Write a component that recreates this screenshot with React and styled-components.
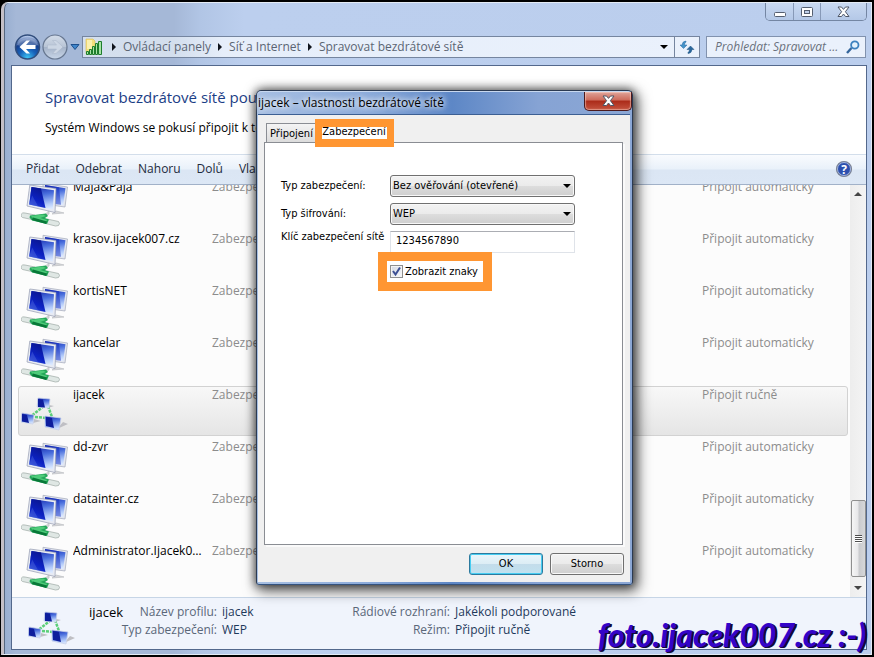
import React, { useState } from 'react';
import styled, { createGlobalStyle } from 'styled-components';

const GlobalStyle = createGlobalStyle`
    * {
        box-sizing: border-box;
    }
    body {
        margin: 0;
        background: #000;
        font-family: "Open Sans", "Noto Sans", sans-serif;
        font-size: 12px;
        line-height: 16px;
        color: #000;
    }
    button, input, select {
        font: inherit;
        color: inherit;
        margin: 0;
    }
`

const Screen = styled.div`
    position: relative;
    display: flex;
    height: 100vh;
    padding: 2px 2px 2px 1px;
    overflow: hidden;
`

const Window = styled.main`
    display: flex;
    flex-direction: column;
    flex: 1;
    min-width: 0;
    padding: 0 4px 4px 7px;
    border: solid 1px #e4ebf5;
    border-left: solid 3px #c4bfc6;
    border-top-left-radius: 7px;
    background: linear-gradient(90deg, #98aed0 0, #a5b8d7 12px, #a5b8d7 170px, #b1c5e5 196px, #bccfee 240px, #bbceed 100%);
    box-shadow: inset 1px 0 0 #56677f;
`

const TitleBar = styled.header`
    display: flex;
    justify-content: flex-end;
    height: 30px;
`

const WindowButtons = styled.div`
    display: flex;
    height: 18px;
    border: solid 1px #7486a3;
    border-top: 0;
    border-radius: 0 0 5px 5px;
    overflow: hidden;
`

const WindowButton = styled.button`
    display: flex;
    align-items: center;
    justify-content: center;
    width: ${props => props.$wide ? '46px' : '27px'};
    padding: 0;
    border: 0;
    border-left: ${props => props.$first ? '0' : 'solid 1px #8799b7'};
    background: linear-gradient(#c9d9f1, #b4c8e7);
`

const NavBar = styled.nav`
    display: flex;
    align-items: center;
    height: 32px;
    padding-bottom: 4px;
`

const NavButtons = styled.div`
    display: flex;
    align-items: center;
    width: 71px;
    padding-left: 3px;
`

const NavButton = styled.button`
    display: flex;
    padding: 0;
    border: 0;
    background: none;
`

const AddressBar = styled.div`
    display: flex;
    align-items: center;
    flex: 1;
    height: 22px;
    padding-left: 2px;
    border: solid 1px #75859f;
    background: linear-gradient(90deg, #d4dfee 0, #d3deed 90px, #e6eefa 140px, #eaf1fc 100%);
    color: #5b6573;
    > svg {
        margin-right: 2px;
    }
`

const Crumb = styled.a`
    color: inherit;
    text-decoration: none;
    white-space: nowrap;
`

const CrumbArrow = styled.span`
    width: 0;
    margin: 0 7px;
    border: solid 4px transparent;
    border-left-color: #10141c;
    border-right-width: 0;
`

const AddressButton = styled.button`
    display: flex;
    align-items: center;
    justify-content: center;
    width: ${props => props.$divided ? '25px' : '21px'};
    height: 20px;
    margin-left: ${props => props.$divided ? '0' : 'auto'};
    padding: 0;
    border: 0;
    border-left: ${props => props.$divided ? 'solid 1px #75859f' : '0'};
    background: none;
`

const SearchBox = styled.label`
    display: flex;
    align-items: center;
    width: 160px;
    height: 22px;
    margin: 0 1px 0 6px;
    padding: 0 5px 0 8px;
    border: solid 1px #8192ae;
    background: #eaf1fc;
`

const SearchInput = styled.input`
    flex: 1;
    min-width: 0;
    padding: 0;
    border: 0;
    outline: 0;
    background: none;
    font-style: italic;
    &::placeholder {
        color: #6a717c;
        opacity: 1;
    }
`

const Client = styled.section`
    display: flex;
    flex-direction: column;
    flex: 1;
    min-height: 0;
    border: solid 1px #53688c;
    background: #fcfcfc;
`

const Intro = styled.div`
    height: 88px;
    padding: 20px 33px;
    background: #fff;
    white-space: nowrap;
    overflow: hidden;
`

const Heading = styled.h1`
    margin: 0 0 12px;
    color: #1b3e86;
    font-size: 15px;
    font-weight: 400;
    line-height: 22px;
`

const Paragraph = styled.p`
    margin: 0;
`

const Toolbar = styled.div`
    display: flex;
    align-items: center;
    gap: 16px;
    height: 31px;
    padding: 0 13px 1px 14px;
    border-top: solid 1px #d3deeb;
    border-bottom: solid 1px #a1b1c8;
    background: linear-gradient(#f9fbfe 0, #e9f1fa 48%, #dbe6f4 52%, #dce7f5 100%);
`

const ToolButton = styled.button`
    padding: 0;
    border: 0;
    background: none;
    color: #1e2a3c;
    white-space: nowrap;
`

const HelpButton = styled.button`
    display: flex;
    margin-left: auto;
    padding: 0;
    border: 0;
    background: none;
`

const ListArea = styled.div`
    display: flex;
    flex: 1;
    min-height: 0;
`

const NetworkList = styled.ul`
    display: flex;
    flex-direction: column;
    justify-content: flex-end;
    gap: 2px;
    flex: 1;
    margin: 0;
    padding: 0 2px 5px 6px;
    overflow: hidden;
    list-style: none;
`

const NetworkRow = styled.li`
    display: grid;
    grid-template-columns: 54px 139px 1fr 145px;
    flex: none;
    height: 50px;
    border: solid 1px ${props => props.$selected ? '#d2d2d2' : 'transparent'};
    border-radius: 3px;
    background: ${props => props.$selected ? 'linear-gradient(#f8f8f8, #e5e5e5)' : 'none'};
    white-space: nowrap;
`

const IconCell = styled.span`
    padding: 2px 0 0 2px;
`

const NetworkName = styled.span`
    overflow: hidden;
    text-overflow: ellipsis;
    padding-right: 8px;
`

const Muted = styled.span`
    color: #8c8c8c;
    overflow: hidden;
`

const ScrollBar = styled.div`
    display: flex;
    flex-direction: column;
    align-items: center;
    justify-content: space-between;
    width: 16px;
    padding: 7px 0;
    background: linear-gradient(90deg, #ededed, #f4f4f4);
`

const ScrollArrow = styled.span`
    border: solid 4px transparent;
    border-top: ${props => props.$down ? 'solid 4px #444' : '0'};
    border-bottom: ${props => props.$down ? '0' : 'solid 4px #444'};
`

const ScrollThumb = styled.div`
    display: flex;
    flex-direction: column;
    align-items: center;
    justify-content: center;
    width: 15px;
    height: 77px;
    margin: auto 0 9px;
    border: solid 1px #8f8f8f;
    border-radius: 2px;
    background: linear-gradient(90deg, #f6f6f6 0, #e6e6e8 48%, #c9cacd 52%, #d6d7d9 100%);
`

const Grip = styled.i`
    width: 7px;
    height: 2px;
    border-top: solid 1px #4d4d4d;
    background: #fff;
`

const Details = styled.footer`
    display: flex;
    height: 52px;
    padding: 5px 16px;
    border-top: solid 1px #c6d5e6;
    background: #f0f4fc;
    white-space: nowrap;
`

const DetailsName = styled.strong`
    width: 36px;
    margin-left: 11px;
    font-size: 13px;
    font-weight: 400;
    line-height: 18px;
`

const Facts = styled.dl`
    display: grid;
    grid-template-columns: 92px auto;
    grid-auto-rows: 18px;
    column-gap: 5px;
    width: ${props => props.$width};
    margin: 0;
    line-height: 18px;
`

const FactLabel = styled.dt`
    display: flex;
    justify-content: flex-end;
    color: #5a6779;
`

const FactValue = styled.dd`
    margin: 0;
    color: #1e395b;
`

const Dialog = styled.section`
    position: absolute;
    top: 90px;
    left: 256px;
    width: 377px;
    height: 495px;
    display: flex;
    flex-direction: column;
    border: solid 1px #2b3a52;
    border-bottom-color: #34537f;
    border-radius: 5px 5px 3px 3px;
    background: linear-gradient(90deg, #a7bfe2 0, #8cabda 30%, #5d87c6 52%, #86a3d4 75%, #8ba7d5 100%);
    box-shadow: 0 0 8px 1px rgba(0, 0, 0, .5), 3px 4px 14px 2px rgba(0, 0, 0, .6);
    font-family: "DejaVu Sans Condensed", "Noto Sans", sans-serif;
    font-size: 11px;
    line-height: 14px;
`

const DialogTitle = styled.header`
    display: flex;
    justify-content: space-between;
    height: 23px;
    border-top: solid 1px #c8d8ef;
    border-radius: 5px 5px 0 0;
`

const DialogHeading = styled.h2`
    margin: 0;
    padding-left: 1px;
    font-family: "Open Sans", "Noto Sans", sans-serif;
    font-size: 12px;
    font-weight: 400;
    line-height: 22px;
    text-shadow: 0 0 6px #fff, 0 0 6px #fff;
`

const CloseButton = styled.button`
    display: flex;
    align-items: center;
    justify-content: center;
    width: 48px;
    height: 19px;
    padding: 0;
    border: solid 1px #4b1a1d;
    border-top: 0;
    border-radius: 0 0 5px 5px;
    background: linear-gradient(#dfa399 0, #cd6a5a 45%, #ab2b19 50%, #c4533f 100%);
    box-shadow: inset 0 0 1px 1px rgba(255, 220, 210, .5);
`

const DialogBody = styled.div`
    display: flex;
    flex-direction: column;
    flex: 1;
    margin: 0 2px 2px 1px;
    padding: 8px 7px 7px 6px;
    border-top: solid 1px #3c5f93;
    background: #f0f0f0;
`

const Tabs = styled.div`
    display: flex;
    height: 19px;
    padding-left: 2px;
`

const Tab = styled.button`
    position: relative;
    width: ${props => props.$active ? '74px' : '51px'};
    height: 19px;
    padding: ${props => props.$active ? '0 0 2px' : '1px 0 0'};
    border: solid 1px #8a8d93;
    border-bottom: 0;
    background: ${props => props.$active ? '#fff' : 'linear-gradient(#f4f4f4, #dcdcdc)'};
    white-space: nowrap;
`

const Marker = styled.span`
    position: absolute;
    inset: ${props => props.$inset};
    border: solid #ff9632;
    border-width: ${props => props.$width};
    pointer-events: none;
`

const Panel = styled.form`
    flex: 1;
    padding: 32px 16px;
    border: solid 1px #8a8d93;
    background: #fff;
    box-shadow: 2px 2px 0 #fafafa;
`

const Fields = styled.div`
    display: grid;
    grid-template-columns: 109px 185px;
    row-gap: 6px;
`

const FieldLabel = styled.label`
    padding-top: ${props => props.$raised ? '0' : '4px'};
    line-height: ${props => props.$raised ? '12px' : '14px'};
    white-space: nowrap;
`

const SelectBox = styled.div`
    display: grid;
    align-items: center;
    height: 22px;
    > * {
        grid-area: 1 / 1;
    }
`

const Select = styled.select`
    appearance: none;
    width: 100%;
    height: 22px;
    padding: 0 18px 0 2px;
    border: solid 1px #707070;
    border-radius: 3px;
    background: linear-gradient(#f2f2f2 0, #ebebeb 49%, #dddddd 50%, #cfcfcf 100%);
    box-shadow: inset 0 0 0 1px #f8f8f8;
`

const Caret = styled.span`
    justify-self: end;
    margin-right: ${props => props.$flush ? '0' : '4px'};
    border: solid 4px transparent;
    border-top-color: #000;
    border-bottom: 0;
    pointer-events: none;
`

const KeyInput = styled.input`
    width: 100%;
    height: 22px;
    padding: 0 5px 3px;
    border: solid 1px #dfe3e9;
    border-top-color: #abadb3;
    outline: 0;
`

const ShowKey = styled.label`
    position: relative;
    display: flex;
    align-items: center;
    gap: 2px;
    width: 96px;
    height: 21px;
    margin: 8px 0 0 106px;
    padding-left: 3px;
    white-space: nowrap;
`

const CheckBox = styled.input`
    appearance: none;
    width: 13px;
    height: 13px;
    border: solid 1px #8e8f8f;
    background: linear-gradient(135deg, #d4d9e2, #f6f8fb);
    box-shadow: inset 0 0 0 1px #f4f4f4;
`

const CheckHolder = styled.span`
    display: grid;
    > * {
        grid-area: 1 / 1;
    }
    svg {
        pointer-events: none;
    }
`

const DialogButtons = styled.div`
    display: flex;
    justify-content: flex-end;
    gap: 7px;
    padding-top: 8px;
    margin-right: -1px;
`

const DialogButton = styled.button`
    width: 74px;
    height: 22px;
    padding: 0;
    border: solid 1px ${props => props.$primary ? '#2c7a9e' : '#707070'};
    border-radius: 3px;
    background: ${props => props.$primary
      ? 'linear-gradient(#eaf6fb 0, #dcedf5 49%, #c3dcea 50%, #c0e2f0 100%)'
      : 'linear-gradient(#f2f2f2 0, #ebebeb 49%, #dddddd 50%, #cfcfcf 100%)'};
    box-shadow: inset 0 0 0 ${props => props.$primary ? '1px #46cdf2' : '1px #f8f8f8'};
`

const Signature = styled.div`
    position: absolute;
    right: 8px;
    bottom: 2px;
    color: #3404c8;
    font-family: Lato, sans-serif;
    font-size: 32px;
    font-style: italic;
    font-weight: 900;
    line-height: 40px;
    text-shadow: 1px 1px 0 #10083c, 2px 1px 0 #10083c;
    white-space: nowrap;
`

const BackIcon = () => (
  <svg width="27" height="28" viewBox="0 0 27 28">
    <defs>
      <radialGradient id="back" cx=".5" cy=".95" r=".9">
        <stop offset="0" stopColor="#3fc4f4" />
        <stop offset=".4" stopColor="#1762ba" />
        <stop offset=".72" stopColor="#173f8c" />
        <stop offset="1" stopColor="#b6c9ea" />
      </radialGradient>
    </defs>
    <circle cx="13.500" cy="14" r="12" fill="url(#back)" stroke="#314e7d" strokeWidth="1.500" />
    <path d="M3 12a11 9.500 0 0 1 21 0q-10 4-21 0z" fill="#fff" opacity=".25" />
    <path d="M5.500 14l7-6.500h3.500l-4 4.500h9.500v4h-9.500l4 4.500h-3.500z" fill="#fff" />
  </svg>
)

const ForwardIcon = () => (
  <svg width="28" height="28" viewBox="0 0 28 28">
    <defs>
      <linearGradient id="forward" x2="0" y2="1">
        <stop offset="0" stopColor="#d3dce9" />
        <stop offset=".48" stopColor="#b9c5d6" />
        <stop offset=".52" stopColor="#a6b4c9" />
        <stop offset="1" stopColor="#c8d6e9" />
      </linearGradient>
    </defs>
    <circle cx="14" cy="14" r="12" fill="url(#forward)" stroke="#66768f" strokeWidth="1.200" />
    <path d="M22 14l-7-6.500h-3.500l4 4.500h-9v4h9l-4 4.500h3.500z" fill="#ccd6e4" stroke="#a8b5c8" strokeWidth=".5" />
  </svg>
)

const HistoryIcon = () => (
  <svg width="12" height="8" viewBox="0 0 12 8">
    <path d="M2 1.500h8l-4 5z" fill="#3f86cb" stroke="#1d4f8d" />
  </svg>
)

const SignalIcon = () => (
  <svg width="18" height="18" viewBox="0 0 18 18">
    <path d="M1 1h7l2 2v13H1z" fill="#f4df7c" stroke="#d9bc54" strokeWidth=".6" />
    <path d="M2 2h5v9H2z" fill="#fbf0ae" />
    <g fill="#a7e3a5" stroke="#1e7d2b">
      <path d="M1.500 13.500h2v3h-2zM4.500 11.500h2v5h-2zM7.500 8.500h2v8h-2zM10.500 5.500h2v11h-2zM13.500 3.500h3v13h-3z" />
    </g>
  </svg>
)

const RefreshIcon = () => (
  <svg width="16" height="16" viewBox="0 0 16 16">
    <path d="M7 2Q3.500 2 3 6H1l3.500 3.500L8 6H5.500Q5.500 4 7 3z" fill="#4492c8" stroke="#2a6ca4" strokeWidth=".5" />
    <path d="M9 14.500q3.500 0 4-4h2L11.500 7 8 10.500h2.500q0 2-1.500 3z" fill="#29679d" stroke="#1d517f" strokeWidth=".5" />
  </svg>
)

const SearchIcon = () => (
  <svg width="14" height="14" viewBox="0 0 14 14">
    <path d="M1 13l4.500-5" stroke="#35669c" strokeWidth="2.400" />
    <circle cx="8.800" cy="5" r="3.700" fill="#e2f1fc" stroke="#3c81be" strokeWidth="1.800" />
  </svg>
)

const HelpIcon = () => (
  <svg width="18" height="18" viewBox="0 0 18 18">
    <circle cx="9" cy="9" r="7.500" fill="#2c4fae" stroke="#7d8494" strokeWidth="1.200" />
    <circle cx="9" cy="9" r="6.500" fill="none" stroke="#c3cfe9" strokeWidth=".8" />
    <text x="9" y="13.500" textAnchor="middle" fontSize="12" fontWeight="700" fill="#fff">?</text>
  </svg>
)

const MinimizeIcon = () => (
  <svg width="14" height="12" viewBox="0 0 14 12">
    <rect x="1.500" y="6.500" width="11" height="4" rx="1" fill="#fff" stroke="#555f70" />
  </svg>
)

const MaximizeIcon = () => (
  <svg width="14" height="12" viewBox="0 0 14 12">
    <rect x="1.500" y="1.500" width="11" height="9" rx="1" fill="#fff" stroke="#555f70" />
    <rect x="4.500" y="4.500" width="5" height="3" fill="#c0d0ea" stroke="#555f70" />
  </svg>
)

const CrossIcon = () => (
  <svg width="13" height="12" viewBox="0 0 13 12">
    <path d="M1 1h3.500l2 2.400L8.500 1H12L8.400 5.700 12 10.500H8.500l-2-2.500-2 2.500H1l3.600-4.800z" fill="#fff" stroke="#4f5767" />
  </svg>
)

const CheckIcon = () => (
  <svg width="13" height="13" viewBox="0 0 13 13">
    <path d="M3 6l2.500 3.500L10 2.500" fill="none" stroke="#3c4f93" strokeWidth="2" />
  </svg>
)

const ScreenGradient = ({ id }) => (
  <linearGradient id={id} x1=".4" y1="0" x2=".6" y2="1">
    <stop offset="0" stopColor="#1a30b4" />
    <stop offset=".35" stopColor="#4a6fdd" />
    <stop offset=".8" stopColor="#b4ccfa" />
    <stop offset="1" stopColor="#dce9ff" />
  </linearGradient>
)

const ComputersIcon = () => (
  <svg width="50" height="48" viewBox="0 0 50 48">
    <defs>
      <ScreenGradient id="screen" />
      <linearGradient id="shade" x1=".6" y1="0" x2=".2" y2="1">
        <stop offset="0" stopColor="#0a1690" />
        <stop offset=".6" stopColor="#0c22c4" />
        <stop offset="1" stopColor="#2a48d4" />
      </linearGradient>
    </defs>
    <path d="M31 33l12-1-8-2zM28 29v4l-7 3" fill="#d5d5d8" stroke="#c2c4c8" strokeWidth=".8" />
    <path d="M22 2.300l24.500 3.700-2.500 20-22-3z" fill="#e3e6ef" stroke="#a3a9ba" strokeWidth=".7" />
    <path d="M24 4l20.500 3.300-2.300 16.700L24 22z" fill="url(#screen)" />
    <path d="M24 4l14 2.200 2 17.500L24 22z" fill="#1229bd" opacity=".5" />
    <path d="M8.800 4l26.200 3.500-1 24L6 25z" fill="#e8ebf3" stroke="#939bb0" strokeWidth=".7" />
    <path d="M10.500 6L33 9.300 31.800 28.500 8.200 23.500z" fill="url(#screen)" />
    <path d="M10.500 6l9.500 1.400L24.500 27 8.200 23.500z" fill="url(#shade)" />
    <path d="M8.200 23.500l3-9 6 11z" fill="#6f8cea" opacity=".3" />
    <path d="M0 33.500q1.500-2.500 4-1.500l10 2-1 5-11.500-2.500q-2-1-1.500-3z" fill="#dfe7e4" stroke="#9da9a5" strokeWidth=".7" />
    <path d="M26 38l11.500 2.500q2 2 0 4l-3 .500-10-2.500z" fill="#dfe7e4" stroke="#9da9a5" strokeWidth=".7" />
    <path d="M9 34.500l16-2 2 2.500-3 2 4 1.500-2 4.500-15-3.500-2.500-3z" fill="#24a65a" />
    <path d="M10 35l12-1.500 3 1.500-6 2 7 2-1 2-12-3z" fill="#4fcb7a" />
    <path d="M12 36.500l14 4-1 2.500-14-4z" fill="#087838" />
  </svg>
)

const AdHocIcon = () => (
  <svg width="50" height="48" viewBox="0 0 50 48">
    <defs><ScreenGradient id="small" /></defs>
    <path d="M36 40l11-5-5-2zM12 34l8-2-7-2zM27 19l6-2-5-1z" fill="#bfbfc4" />
    <path d="M23 17L9 28M27 17l4 11M14 28l12 1" fill="none" stroke="#5bcf78" strokeWidth="2.500" strokeDasharray="3 1" />
    <g stroke="#c8d0e8" strokeWidth=".8">
      <path d="M17 9l12 1-1 9-12-1z" fill="url(#small)" />
      <path d="M1 24l12 2-1 9-12-2z" fill="url(#small)" />
      <path d="M24 27l16 2-2 12-14-3z" fill="url(#small)" />
    </g>
    <path d="M17 10l5 .500 2 8-7-.5zM1 25l5 1 2 8-7-1.500zM25 28l6 1 2 10-8-2z" fill="#0d1d9c" />
  </svg>
)

const networks = [
  { name: 'Maja&Paja', mode: 'Připojit automaticky' },
  { name: 'krasov.ijacek007.cz', mode: 'Připojit automaticky' },
  { name: 'kortisNET', mode: 'Připojit automaticky' },
  { name: 'kancelar', mode: 'Připojit automaticky' },
  { name: 'ijacek', mode: 'Připojit ručně', adHoc: true },
  { name: 'dd-zvr', mode: 'Připojit automaticky' },
  { name: 'datainter.cz', mode: 'Připojit automaticky' },
  { name: 'Administrator.Ijacek00...', mode: 'Připojit automaticky' },
];

const tools = ['Přidat', 'Odebrat', 'Nahoru', 'Dolů', 'Vlastnosti adaptéru'];

const Explorer = () => (
  <Window>
    <TitleBar>
      <WindowButtons>
        <WindowButton $first aria-label="Minimalizovat"><MinimizeIcon /></WindowButton>
        <WindowButton aria-label="Maximalizovat"><MaximizeIcon /></WindowButton>
        <WindowButton $wide aria-label="Zavřít"><CrossIcon /></WindowButton>
      </WindowButtons>
    </TitleBar>
    <NavBar>
      <NavButtons>
        <NavButton aria-label="Zpět"><BackIcon /></NavButton>
        <NavButton aria-label="Vpřed"><ForwardIcon /></NavButton>
        <NavButton aria-label="Historie"><HistoryIcon /></NavButton>
      </NavButtons>
      <AddressBar>
        <SignalIcon />
        <CrumbArrow />
        <Crumb href="#panely">Ovládací panely</Crumb>
        <CrumbArrow />
        <Crumb href="#internet">Síť a Internet</Crumb>
        <CrumbArrow />
        <Crumb href="#site">Spravovat bezdrátové sítě</Crumb>
        <AddressButton aria-label="Předchozí umístění"><Caret $flush /></AddressButton>
        <AddressButton $divided aria-label="Aktualizovat"><RefreshIcon /></AddressButton>
      </AddressBar>
      <SearchBox>
        <SearchInput aria-label="Prohledat" placeholder="Prohledat: Spravovat ..." />
        <SearchIcon />
      </SearchBox>
    </NavBar>
    <Client>
      <Intro>
        <Heading>Spravovat bezdrátové sítě používající připojení</Heading>
        <Paragraph>Systém Windows se pokusí připojit k těmto sítím v níže uvedeném pořadí.</Paragraph>
      </Intro>
      <Toolbar>
        {tools.map(tool => <ToolButton key={tool}>{tool}</ToolButton>)}
        <HelpButton aria-label="Nápověda"><HelpIcon /></HelpButton>
      </Toolbar>
      <ListArea>
        <NetworkList>
          {networks.map(({ name, mode, adHoc }) => (
            <NetworkRow key={name} $selected={adHoc}>
              <IconCell>{adHoc ? <AdHocIcon /> : <ComputersIcon />}</IconCell>
              <NetworkName>{name}</NetworkName>
              <Muted>Zabezpečení</Muted>
              <Muted>{mode}</Muted>
            </NetworkRow>
          ))}
        </NetworkList>
        <ScrollBar>
          <ScrollArrow />
          <ScrollThumb><Grip /><Grip /><Grip /><Grip /></ScrollThumb>
          <ScrollArrow $down />
        </ScrollBar>
      </ListArea>
      <Details>
        <AdHocIcon />
        <DetailsName>ijacek</DetailsName>
        <Facts $width="233px">
          <FactLabel>Název profilu:</FactLabel>
          <FactValue>ijacek</FactValue>
          <FactLabel>Typ zabezpečení:</FactLabel>
          <FactValue>WEP</FactValue>
        </Facts>
        <Facts $width="auto">
          <FactLabel>Rádiové rozhraní:</FactLabel>
          <FactValue>Jakékoli podporované</FactValue>
          <FactLabel>Režim:</FactLabel>
          <FactValue>Připojit ručně</FactValue>
        </Facts>
      </Details>
    </Client>
  </Window>
)

const PropertiesDialog = () => {
  const [key, setKey] = useState('1234567890');
  const [visible, setVisible] = useState(true);

  return (
    <Dialog role="dialog" aria-labelledby="dialog-title">
      <DialogTitle>
        <DialogHeading id="dialog-title">ijacek – vlastnosti bezdrátové sítě</DialogHeading>
        <CloseButton aria-label="Zavřít"><CrossIcon /></CloseButton>
      </DialogTitle>
      <DialogBody>
        <Tabs role="tablist">
          <Tab role="tab">Připojení</Tab>
          <Tab role="tab" $active aria-selected="true">
            Zabezpečení
            <Marker $inset="-5px -4px -5px -3px" $width="8px 7px" />
          </Tab>
        </Tabs>
        <Panel>
          <Fields>
            <FieldLabel htmlFor="security">Typ zabezpečení:</FieldLabel>
            <SelectBox>
              <Select id="security">
                <option>Bez ověřování (otevřené)</option>
              </Select>
              <Caret />
            </SelectBox>
            <FieldLabel htmlFor="cipher">Typ šifrování:</FieldLabel>
            <SelectBox>
              <Select id="cipher">
                <option>WEP</option>
              </Select>
              <Caret />
            </SelectBox>
            <FieldLabel $raised htmlFor="key">Klíč zabezpečení sítě</FieldLabel>
            <KeyInput
              id="key"
              type={visible ? 'text' : 'password'}
              value={key}
              onChange={e => setKey(e.target.value)}
            />
          </Fields>
          <ShowKey>
            <CheckHolder>
              <CheckBox type="checkbox" checked={visible} onChange={() => setVisible(!visible)} />
              {visible && <CheckIcon />}
            </CheckHolder>
            Zobrazit znaky
            <Marker $inset="-9px" $width="9px" />
          </ShowKey>
        </Panel>
        <DialogButtons>
          <DialogButton $primary>OK</DialogButton>
          <DialogButton>Storno</DialogButton>
        </DialogButtons>
      </DialogBody>
    </Dialog>
  )
}

const App = () => (
  <Screen>
    <GlobalStyle />
    <Explorer />
    <PropertiesDialog />
    <Signature>foto.ijacek007.cz :-)</Signature>
  </Screen>
)

export default App;
